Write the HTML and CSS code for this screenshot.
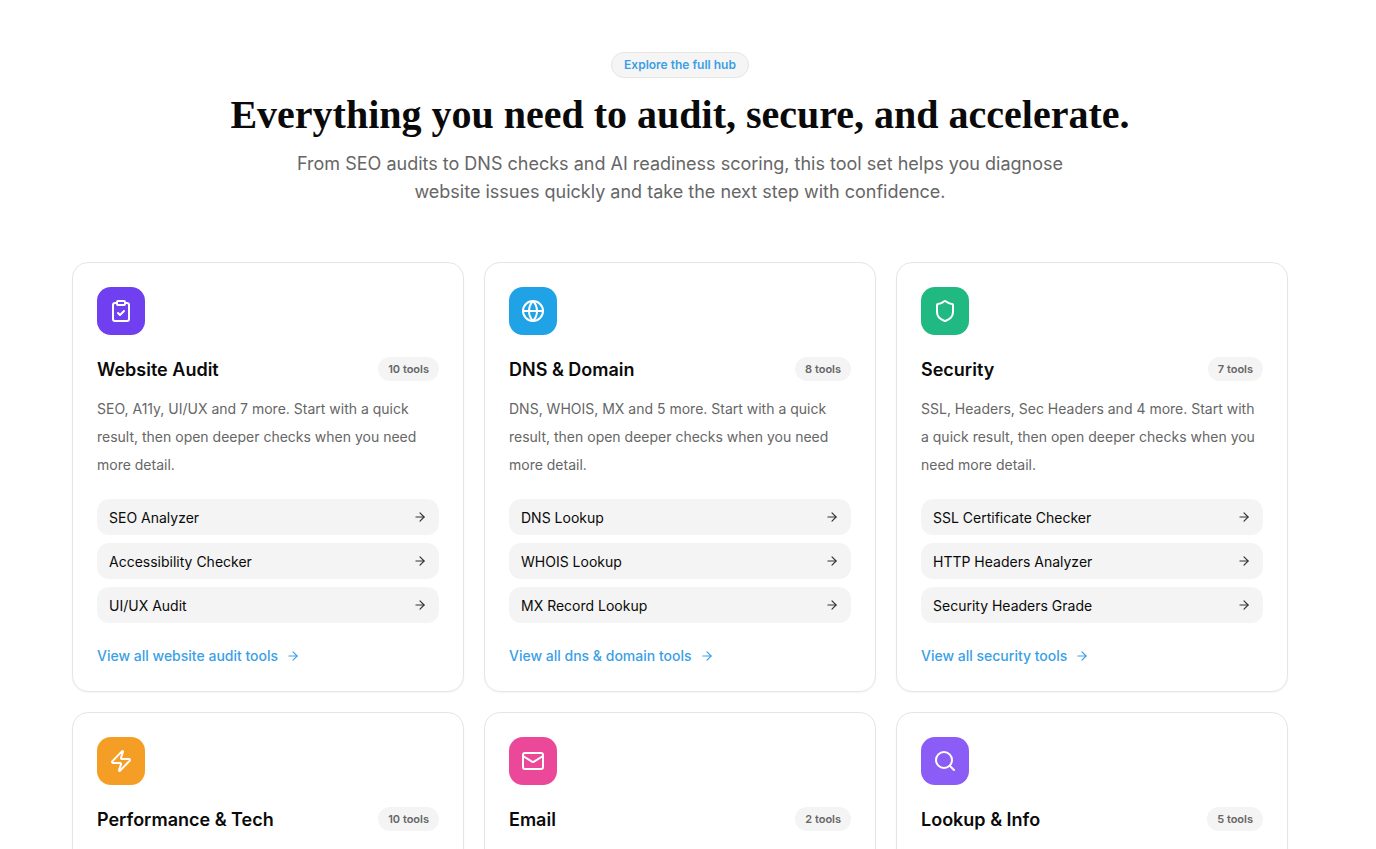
FILE: index.html
```html
<!DOCTYPE html>
<html lang="en">
<head>
  <meta charset="utf-8">
  <title>Explore the full hub</title>
  <link rel="stylesheet" href="styles.css">
</head>
<body>
  <section class="hub">
    <header class="hub-head">
      <span class="eyebrow">Explore the full hub</span>
      <h2>Everything you need to audit, secure, and accelerate.</h2>
      <p>From SEO audits to DNS checks and AI readiness scoring, this tool set helps you diagnose website issues quickly and take the next step with confidence.</p>
    </header>

    <div class="card-grid">
      <article class="card">
        <div class="card-icon violet">
          <svg viewBox="0 0 24 24"><rect x="8" y="2" width="8" height="4" rx="1"/><path d="M16 4h2a2 2 0 0 1 2 2v14a2 2 0 0 1-2 2H6a2 2 0 0 1-2-2V6a2 2 0 0 1 2-2h2"/><path d="m9 14 2 2 4-4"/></svg>
        </div>
        <div class="card-title"><h3>Website Audit</h3><span class="pill">10 tools</span></div>
        <p class="card-desc">SEO, A11y, UI/UX and 7 more. Start with a quick result, then open deeper checks when you need more detail.</p>
        <ul class="tool-list">
          <li><a href="#">SEO Analyzer<svg viewBox="0 0 24 24"><path d="M5 12h14"/><path d="m12 5 7 7-7 7"/></svg></a></li>
          <li><a href="#">Accessibility Checker<svg viewBox="0 0 24 24"><path d="M5 12h14"/><path d="m12 5 7 7-7 7"/></svg></a></li>
          <li><a href="#">UI/UX Audit<svg viewBox="0 0 24 24"><path d="M5 12h14"/><path d="m12 5 7 7-7 7"/></svg></a></li>
        </ul>
        <a class="view-all" href="#">View all website audit tools<svg viewBox="0 0 24 24"><path d="M5 12h14"/><path d="m12 5 7 7-7 7"/></svg></a>
      </article>

      <article class="card">
        <div class="card-icon sky">
          <svg viewBox="0 0 24 24"><circle cx="12" cy="12" r="10"/><path d="M12 2a14.5 14.5 0 0 0 0 20 14.5 14.5 0 0 0 0-20"/><path d="M2 12h20"/></svg>
        </div>
        <div class="card-title"><h3>DNS &amp; Domain</h3><span class="pill">8 tools</span></div>
        <p class="card-desc">DNS, WHOIS, MX and 5 more. Start with a quick result, then open deeper checks when you need more detail.</p>
        <ul class="tool-list">
          <li><a href="#">DNS Lookup<svg viewBox="0 0 24 24"><path d="M5 12h14"/><path d="m12 5 7 7-7 7"/></svg></a></li>
          <li><a href="#">WHOIS Lookup<svg viewBox="0 0 24 24"><path d="M5 12h14"/><path d="m12 5 7 7-7 7"/></svg></a></li>
          <li><a href="#">MX Record Lookup<svg viewBox="0 0 24 24"><path d="M5 12h14"/><path d="m12 5 7 7-7 7"/></svg></a></li>
        </ul>
        <a class="view-all" href="#">View all dns &amp; domain tools<svg viewBox="0 0 24 24"><path d="M5 12h14"/><path d="m12 5 7 7-7 7"/></svg></a>
      </article>

      <article class="card">
        <div class="card-icon green">
          <svg viewBox="0 0 24 24"><path d="M20 13c0 5-3.5 7.5-7.66 8.95a1 1 0 0 1-.67-.01C7.5 20.5 4 18 4 13V6a1 1 0 0 1 1-1c2 0 4.5-1.2 6.24-2.72a1.17 1.17 0 0 1 1.52 0C14.51 3.81 17 5 19 5a1 1 0 0 1 1 1z"/></svg>
        </div>
        <div class="card-title"><h3>Security</h3><span class="pill">7 tools</span></div>
        <p class="card-desc">SSL, Headers, Sec Headers and 4 more. Start with a quick result, then open deeper checks when you need more detail.</p>
        <ul class="tool-list">
          <li><a href="#">SSL Certificate Checker<svg viewBox="0 0 24 24"><path d="M5 12h14"/><path d="m12 5 7 7-7 7"/></svg></a></li>
          <li><a href="#">HTTP Headers Analyzer<svg viewBox="0 0 24 24"><path d="M5 12h14"/><path d="m12 5 7 7-7 7"/></svg></a></li>
          <li><a href="#">Security Headers Grade<svg viewBox="0 0 24 24"><path d="M5 12h14"/><path d="m12 5 7 7-7 7"/></svg></a></li>
        </ul>
        <a class="view-all" href="#">View all security tools<svg viewBox="0 0 24 24"><path d="M5 12h14"/><path d="m12 5 7 7-7 7"/></svg></a>
      </article>

      <article class="card">
        <div class="card-icon amber">
          <svg viewBox="0 0 24 24"><path d="M4 14a1 1 0 0 1-.78-1.63l9.9-10.2a.5.5 0 0 1 .86.46l-1.92 6.02A1 1 0 0 0 13 10h7a1 1 0 0 1 .78 1.63l-9.9 10.2a.5.5 0 0 1-.86-.46l1.92-6.02A1 1 0 0 0 11 14z"/></svg>
        </div>
        <div class="card-title"><h3>Performance &amp; Tech</h3><span class="pill">10 tools</span></div>
      </article>

      <article class="card">
        <div class="card-icon pink">
          <svg viewBox="0 0 24 24"><rect x="2" y="4" width="20" height="16" rx="2"/><path d="m22 7-8.97 5.7a1.94 1.94 0 0 1-2.06 0L2 7"/></svg>
        </div>
        <div class="card-title"><h3>Email</h3><span class="pill">2 tools</span></div>
      </article>

      <article class="card">
        <div class="card-icon purple">
          <svg viewBox="0 0 24 24"><circle cx="11" cy="11" r="8"/><path d="m21 21-4.3-4.3"/></svg>
        </div>
        <div class="card-title"><h3>Lookup &amp; Info</h3><span class="pill">5 tools</span></div>
      </article>
    </div>
  </section>
</body>
</html>
```

FILE: styles.css
```css
* {box-sizing: border-box;}

body {
  margin: 0;
  padding-right: 16px;
  background: #fff;
  color: #0a0a0a;
  font-family: "Inter", "Liberation Sans", sans-serif;
}

svg {
  fill: none;
  stroke: currentColor;
  stroke-width: 2;
  stroke-linecap: round;
  stroke-linejoin: round;
}

.hub {
  width: 1216px;
  margin: 0 auto;
  padding-top: 52px;
}

.hub-head {
  display: flex;
  flex-direction: column;
  align-items: center;
  text-align: center;
  margin-bottom: 56px;
}

.eyebrow {
  height: 26px;
  padding: 0 12px;
  border: 1px solid #e5e5e5;
  border-radius: 13px;
  background: #f5f5f5;
  color: #3b9fe6;
  font-size: 12px;
  font-weight: 600;
  line-height: 24px;
}

.hub-head h2 {
  margin: 14px 0 12px;
  font-family: "Liberation Serif", serif;
  font-size: 40px;
  font-weight: 700;
  line-height: 46px;
}

.hub-head p {
  width: 800px;
  margin: 0;
  color: #666;
  font-size: 18px;
  line-height: 28px;
}

.card-grid {
  display: grid;
  grid-template-columns: repeat(3, 1fr);
  gap: 20px;
}

.card {
  height: 430px;
  padding: 24px;
  border: 1px solid #e5e5e5;
  border-radius: 16px;
  background: #fff;
  box-shadow: 0 1px 2px rgba(0, 0, 0, 0.04);
}

.card-icon {
  display: flex;
  align-items: center;
  justify-content: center;
  width: 48px;
  height: 48px;
  border-radius: 14px;
  color: #fff;
}
.card-icon svg {width: 24px; height: 24px; stroke-width: 2;}

.violet {background: #6f3ff0;}
.sky {background: #1fa3e6;}
.green {background: #20b981;}
.amber {background: #f59e25;}
.pink {background: #ec4899;}
.purple {background: #8b5cf6;}

.card-title {
  display: flex;
  align-items: center;
  justify-content: space-between;
  margin-top: 22px;
  height: 24px;
}

.card-title h3 {
  margin: 0;
  font-size: 18px;
  font-weight: 600;
}

.pill {
  height: 24px;
  padding: 0 10px;
  border-radius: 12px;
  background: #f4f4f4;
  color: #666;
  font-size: 11px;
  font-weight: 600;
  line-height: 24px;
}

.card-desc {
  margin: 14px 0 0;
  color: #666;
  font-size: 14px;
  line-height: 28px;
}

.tool-list {
  display: flex;
  flex-direction: column;
  gap: 8px;
  margin: 20px 0 0;
  padding: 0;
  list-style: none;
}

.tool-list a {
  display: flex;
  align-items: center;
  justify-content: space-between;
  height: 36px;
  padding: 0 12px;
  border-radius: 12px;
  background: #f4f4f4;
  color: #0a0a0a;
  font-size: 14px;
  text-decoration: none;
}
.tool-list svg {width: 14px; height: 14px; color: #333;}

.view-all {
  display: flex;
  align-items: center;
  gap: 8px;
  margin-top: 22px;
  color: #3b9fe6;
  font-size: 14px;
  font-weight: 500;
  line-height: 22px;
  text-decoration: none;
}
.view-all svg {width: 14px; height: 14px;}
```
